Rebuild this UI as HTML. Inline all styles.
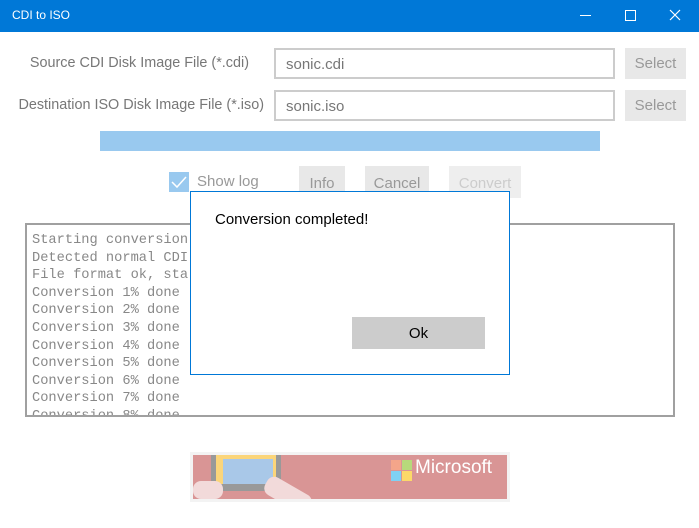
<!DOCTYPE html>
<html><head><style>
body{margin:0;width:699px;height:528px;background:#fff;position:relative;overflow:hidden;font-family:"Segoe UI","Liberation Sans",sans-serif}
.a{position:absolute}
.t{background:#0078d7;left:0;top:0;width:699px;height:32px;color:#fff;font-size:12px}
.lbl{color:#777;font-size:14.4px;text-align:right;left:0px}
.in{border:2px solid #ccc;box-sizing:border-box;color:#777;font-size:15px;padding:6px 10px;background:#fff}
.btn{background:#e8e8e8;color:#999;font-size:15px;text-align:center;box-sizing:border-box}
.log{left:25px;top:223px;width:650px;height:194px;border:2px solid #a0a0a0;box-sizing:border-box;overflow:hidden;font-family:"Liberation Mono",monospace;font-size:13.7px;line-height:17.6px;color:#888;padding:7px 5px;white-space:pre}
</style></head><body>
<div class="a t"><span class="a" style="left:12px;top:8px">CDI to ISO</span>
<span class="a" style="left:580px;top:15px;width:11px;height:1px;background:#fff"></span>
<span class="a" style="left:625px;top:10px;width:9px;height:9px;border:1px solid #fff"></span>
<svg class="a" style="left:669px;top:9px" width="12" height="12"><path d="M1 1L11 11M11 1L1 11" stroke="#fff" stroke-width="1.2"/></svg>
</div>
<div class="a lbl" style="top:55px;width:249px">Source CDI Disk Image File (*.cdi)</div>
<div class="a lbl" style="top:97px;width:264px">Destination ISO Disk Image File (*.iso)</div>
<div class="a in" style="left:274px;top:48px;width:341px;height:31px">sonic.cdi</div>
<div class="a in" style="left:274px;top:90px;width:341px;height:31px">sonic.iso</div>
<div class="a btn" style="left:625px;top:48px;width:61px;height:31px;line-height:32px">Select</div>
<div class="a btn" style="left:625px;top:90px;width:61px;height:31px;line-height:32px">Select</div>
<div class="a" style="left:100px;top:131px;width:500px;height:20px;background:#99c9ef"></div>
<div class="a" style="left:169px;top:172px;width:20px;height:20px;background:#99c9ef"></div>
<svg class="a" style="left:169px;top:172px" width="20" height="20"><path d="M3 10L8 15L17 5" stroke="#fff" stroke-width="1.5" fill="none"/></svg>
<div class="a" style="left:197px;top:173px;color:#999;font-size:15px">Show log</div>
<div class="a btn" style="left:299px;top:166px;width:46px;height:32px;line-height:35px">Info</div>
<div class="a btn" style="left:365px;top:166px;width:64px;height:32px;line-height:35px">Cancel</div>
<div class="a btn" style="left:449px;top:166px;width:72px;height:32px;line-height:35px;color:#ccc;background:#eee">Convert</div>
<div class="a log">Starting conversion
Detected normal CDI
File format ok, sta
Conversion 1% done
Conversion 2% done
Conversion 3% done
Conversion 4% done
Conversion 5% done
Conversion 6% done
Conversion 7% done
Conversion 8% done</div>
<div class="a" style="left:190px;top:191px;width:320px;height:184px;border:1px solid #0078d7;box-sizing:border-box;background:#fff">
<div class="a" style="left:24px;top:19px;font-size:15px;color:#000">Conversion completed!</div>
<div class="a" style="left:161px;top:125px;width:133px;height:32px;background:#ccc;color:#000;font-size:15px;text-align:center;line-height:33px">Ok</div>
</div>
<div class="a" style="left:190px;top:452px;width:320px;height:50px;background:#f3f3f3"></div>
<div class="a" style="left:193px;top:455px;width:314px;height:44px;background:#d99595;overflow:hidden">
<div class="a" style="left:18px;top:0;width:70px;height:36px;background:#999"></div>
<div class="a" style="left:23px;top:0;width:60px;height:29px;background:#fbd57a"></div>
<div class="a" style="left:30px;top:4px;width:50px;height:25px;background:#a9c8e8"></div>
<div class="a" style="left:0;top:26px;width:30px;height:18px;background:#f2dada;border-radius:8px"></div>
<div class="a" style="left:70px;top:30px;width:50px;height:20px;background:#f2dada;border-radius:8px;transform:rotate(30deg)"></div>
<div class="a" style="left:198px;top:5px;width:10px;height:10px;background:#f4a58a"></div>
<div class="a" style="left:209px;top:5px;width:10px;height:10px;background:#b7d97b"></div>
<div class="a" style="left:198px;top:16px;width:10px;height:10px;background:#7fd1f4"></div>
<div class="a" style="left:209px;top:16px;width:10px;height:10px;background:#fcd969"></div>
<div class="a" style="left:222px;top:2px;color:#fff;font-size:19px">Microsoft</div>
</div>
</body></html>
